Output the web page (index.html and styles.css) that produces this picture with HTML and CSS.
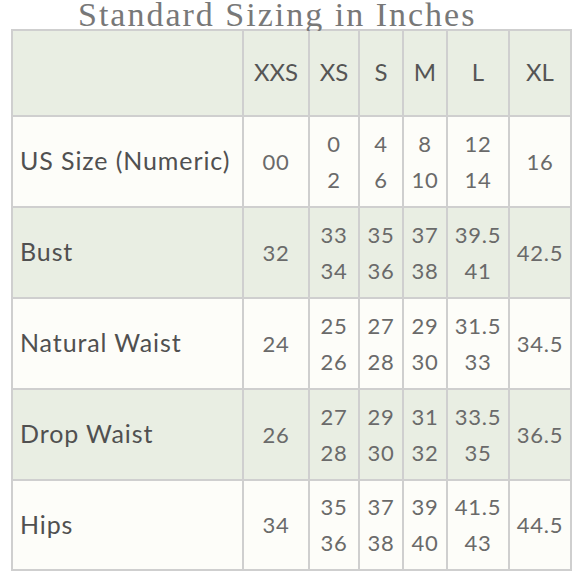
FILE: index.html
```html
<!DOCTYPE html>
<html>
<head>
<meta charset="utf-8">
<link rel="stylesheet" href="styles.css">
</head>
<body>
<div class="title">Standard Sizing in Inches</div>
<div class="chart">
  <div class="cell g lab"></div>
  <div class="cell g hd">XXS</div>
  <div class="cell g hd">XS</div>
  <div class="cell g hd">S</div>
  <div class="cell g hd">M</div>
  <div class="cell g hd">L</div>
  <div class="cell g hd">XL</div>

  <div class="cell w lab">US Size (Numeric)</div>
  <div class="cell w num">00</div>
  <div class="cell w num"><span>0</span><span>2</span></div>
  <div class="cell w num"><span>4</span><span>6</span></div>
  <div class="cell w num"><span>8</span><span>10</span></div>
  <div class="cell w num"><span>12</span><span>14</span></div>
  <div class="cell w num">16</div>

  <div class="cell g lab">Bust</div>
  <div class="cell g num">32</div>
  <div class="cell g num"><span>33</span><span>34</span></div>
  <div class="cell g num"><span>35</span><span>36</span></div>
  <div class="cell g num"><span>37</span><span>38</span></div>
  <div class="cell g num"><span>39.5</span><span>41</span></div>
  <div class="cell g num">42.5</div>

  <div class="cell w lab">Natural Waist</div>
  <div class="cell w num">24</div>
  <div class="cell w num"><span>25</span><span>26</span></div>
  <div class="cell w num"><span>27</span><span>28</span></div>
  <div class="cell w num"><span>29</span><span>30</span></div>
  <div class="cell w num"><span>31.5</span><span>33</span></div>
  <div class="cell w num">34.5</div>

  <div class="cell g lab">Drop Waist</div>
  <div class="cell g num">26</div>
  <div class="cell g num"><span>27</span><span>28</span></div>
  <div class="cell g num"><span>29</span><span>30</span></div>
  <div class="cell g num"><span>31</span><span>32</span></div>
  <div class="cell g num"><span>33.5</span><span>35</span></div>
  <div class="cell g num">36.5</div>

  <div class="cell w lab">Hips</div>
  <div class="cell w num">34</div>
  <div class="cell w num"><span>35</span><span>36</span></div>
  <div class="cell w num"><span>37</span><span>38</span></div>
  <div class="cell w num"><span>39</span><span>40</span></div>
  <div class="cell w num"><span>41.5</span><span>43</span></div>
  <div class="cell w num">44.5</div>
</div>
</body>
</html>
```
FILE: styles.css
```css
html, body {
  margin: 0;
  padding: 0;
  background: #ffffff;
}
.title {
  height: 29px;
  line-height: 29px;
  padding-left: 78px;
  font-family: "Liberation Serif", "DejaVu Serif", serif;
  font-size: 34px;
  letter-spacing: 2px;
  color: #787878;
  white-space: nowrap;
}
.chart {
  margin-left: 11px;
  width: 561px;
  box-sizing: border-box;
  display: grid;
  grid-template-columns: 231px 66px 50px 44px 44px 62px 62px;
  grid-template-rows: 86px 91px 91px 91px 91px 90px;
  border-left: 2px solid #cfcfcf;
  border-top: 2px solid #cfcfcf;
}
.cell {
  box-sizing: border-box;
  border-right: 2px solid #cfcfcf;
  border-bottom: 2px solid #cfcfcf;
  display: flex;
  flex-direction: column;
  align-items: center;
  justify-content: center;
  font-family: Lato, "Noto Sans", sans-serif;
  color: #606060;
}
.g { background: #e9eee3; }
.w { background: #fdfdf9; }
.lab {
  align-items: flex-start;
  padding-left: 7px;
  padding-bottom: 3px;
  font-size: 25px;
  letter-spacing: 0.9px;
  color: #505050;
}
.hd {
  font-size: 24px;
  color: #555555;
  padding-bottom: 3px;
}
.num {
  font-size: 22px;
  letter-spacing: 0.8px;
  line-height: 36px;
  color: #6a6a6a;
}
```
